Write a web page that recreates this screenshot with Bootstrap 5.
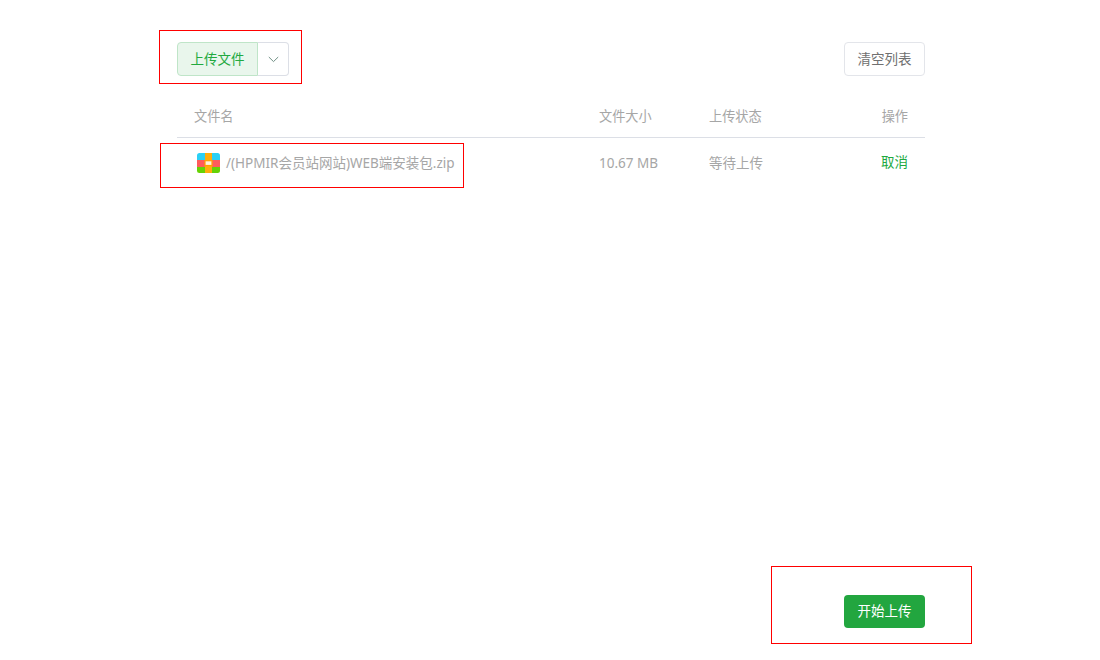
<!doctype html>
<html lang="zh-CN">
<head>
<meta charset="utf-8">
<title>上传文件</title>
<link href="https://cdn.jsdelivr.net/npm/bootstrap@5.3.0/dist/css/bootstrap.min.css" rel="stylesheet">
<style>
html,body{height:660px;overflow:hidden;background:#fff}
body{position:relative;font-family:"Noto Sans","Noto Sans CJK SC",sans-serif;font-size:13.5px;color:#a6a6a6}
.up-wrap{width:748px;height:660px;margin-left:177px;padding-top:42px}
.up-split .up-main{height:34px;width:81px;padding:1px 0 0;font-size:13.5px;color:#22a93f;background:#e9f6ec;border:1px solid #bfe5c8;border-radius:4px 0 0 4px;box-shadow:none}
.up-split .up-caret{height:34px;width:32px;padding:0;margin-left:-1px;background:#fff;border:1px solid #dcdfe6;border-left-color:#bfe5c8;border-radius:0 4px 4px 0}
.up-clear{height:34px;width:81px;padding:1px 0 0;font-size:13.5px;color:#707070;background:#fff;border:1px solid #e3e5ea;border-radius:4px}
.up-head{height:44px;margin-top:18px;border-bottom:1px solid #dcdfe6;padding-top:2px;font-size:13.2px}
.up-row{height:50px}
.c-name{width:404px;padding-left:17px}
.c-name-row{width:404px;padding-left:20px}
.c-size{width:128px;padding-left:18px}
.c-stat{width:110px}
.c-act{width:106px;text-align:right;padding-right:17px}
.up-cancel{color:#22a93f;text-decoration:none;position:relative;top:-1px}
.up-start{height:33px;width:81px;padding:0;font-size:13.5px;color:#fff;background:#22a63f;border:0;border-radius:4px}
.up-foot{position:absolute;left:844px;top:595px}
.mark-box{position:absolute;border:1px solid #f00;pointer-events:none}
.mb-1x{left:159px;top:30px;width:143px;height:54px}
.mb-2x{left:160px;top:143px;width:304px;height:45px}
.mb-3x{left:771px;top:566px;width:201px;height:78px}
.zip-ico{width:23px;height:20px;flex:none;margin-right:6px}
</style>
</head>
<body>
<div class="up-wrap">
  <div class="d-flex justify-content-between align-items-center">
    <div class="btn-group up-split">
      <button type="button" class="btn up-main">上传文件</button>
      <button type="button" class="btn up-caret d-flex align-items-center justify-content-center" aria-label="更多">
        <svg width="11" height="7" viewBox="0 0 11 7"><path d="M.8 1l4.7 4.6L10.2 1" fill="none" stroke="#6f8f84" stroke-width="1"/></svg>
      </button>
    </div>
    <button type="button" class="btn up-clear">清空列表</button>
  </div>
  <div class="up-head d-flex align-items-center">
    <div class="c-name">文件名</div>
    <div class="c-size">文件大小</div>
    <div class="c-stat">上传状态</div>
    <div class="c-act">操作</div>
  </div>
  <div class="up-row d-flex align-items-center">
    <div class="c-name-row d-flex align-items-center">
      <svg class="zip-ico" viewBox="0 0 23 20">
        <defs><clipPath id="zr"><rect width="23" height="20" rx="2.5"/></clipPath></defs>
        <g clip-path="url(#zr)">
          <rect width="23" height="7" fill="#2bd0f5"/>
          <rect y="7" width="23" height="7" fill="#ff5c5c"/>
          <rect y="14" width="23" height="6" fill="#66d205"/>
          <rect x="8" width="7" height="20" fill="#ffad0d"/>
          <rect x="8" y="7.7" width="7" height="4.8" fill="#fff3dd" stroke="#ffa000" stroke-width="1.2"/>
        </g>
      </svg>
      <span>/(HPMIR会员站网站)WEB端安装包.zip</span>
    </div>
    <div class="c-size">10.67 MB</div>
    <div class="c-stat">等待上传</div>
    <div class="c-act"><a href="#" class="up-cancel">取消</a></div>
  </div>
</div>
<div class="up-foot"><button type="button" class="btn up-start">开始上传</button></div>
<div class="mark-box mb-1x"></div>
<div class="mark-box mb-2x"></div>
<div class="mark-box mb-3x"></div>
<script src="https://cdn.jsdelivr.net/npm/bootstrap@5.3.0/dist/js/bootstrap.bundle.min.js"></script>
</body>
</html>
